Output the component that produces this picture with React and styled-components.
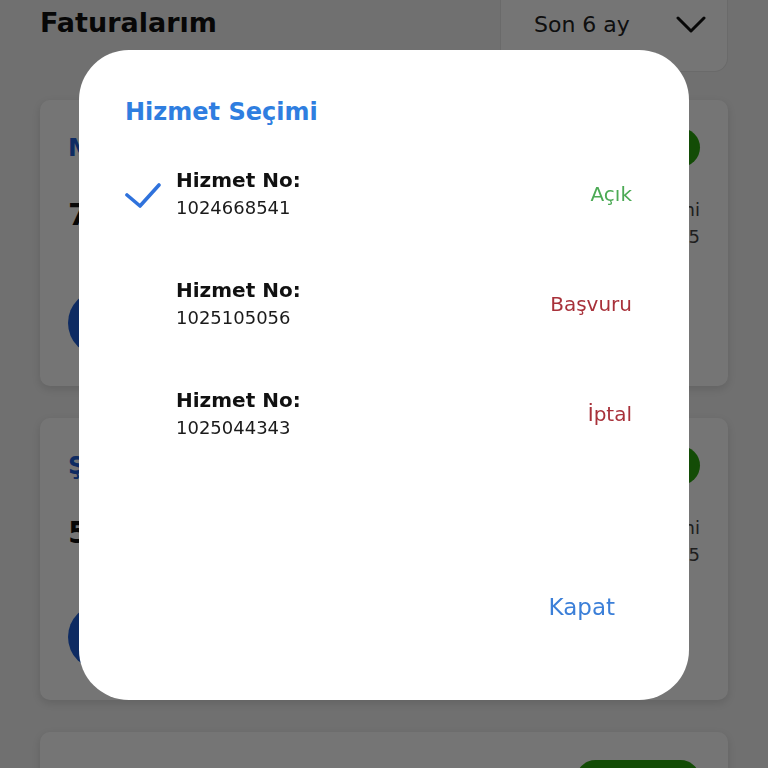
import React, { useState } from "react";
import styled, { createGlobalStyle } from "styled-components";

const GlobalStyle = createGlobalStyle`
  body {
    margin: 0;
    background: #f3f3f3;
    font-family: "DejaVu Sans", "Noto Sans", sans-serif;
  }
  #root {
    height: 768px;
    overflow: hidden;
  }
`;

const Page = styled.div`
  padding: 0 40px;
  display: flex;
  flex-direction: column;
`;

const Header = styled.div`
  display: flex;
  justify-content: space-between;
  align-items: flex-start;
  height: 72px;
`;

const PageTitle = styled.h1`
  margin: 6px 0 0;
  font-size: 27px;
  font-weight: 700;
  color: #111;
  line-height: 34px;
`;

const Dropdown = styled.div`
  box-sizing: border-box;
  width: 228px;
  height: 72px;
  padding: 0 21px 22px 33px;
  display: flex;
  align-items: center;
  justify-content: space-between;
  background: #fff;
  border: 1px solid #e6e6e6;
  border-top: none;
  border-radius: 0 0 14px 14px;
  font-size: 22px;
  color: #222;
`;

const CardList = styled.div`
  display: flex;
  flex-direction: column;
  gap: 32px;
  margin-top: 28px;
`;

const Card = styled.div`
  box-sizing: border-box;
  height: ${(props) => props.height}px;
  padding: 28px 28px 30px 28px;
  background: #fff;
  border-radius: 10px;
  box-shadow: 0 3px 8px rgba(0, 0, 0, 0.12);
  display: flex;
  flex-direction: column;
`;

const CardTop = styled.div`
  display: flex;
  justify-content: space-between;
  align-items: center;
`;

const CardTitle = styled.span`
  font-size: 24px;
  font-weight: 700;
  color: #1f5fd6;
`;

const Badge = styled.span`
  padding: 10px 30px;
  border-radius: 20px;
  background: #2ba50e;
  color: #fff;
  font-size: 16px;
  font-weight: 600;
`;

const CardMid = styled.div`
  display: flex;
  justify-content: space-between;
  align-items: flex-start;
  margin-top: 30px;
`;

const Amount = styled.span`
  font-size: 30px;
  font-weight: 800;
  color: #111;
`;

const DateBox = styled.div`
  display: flex;
  flex-direction: column;
  align-items: flex-end;
  gap: 6px;
  margin-top: 2px;
  font-size: 18px;
  color: #444;
`;

const CardBottom = styled.div`
  margin-top: auto;
  display: flex;
  align-items: center;
`;

const RoundButton = styled.span`
  width: 66px;
  height: 66px;
  border-radius: 50%;
  background: #1f5fd6;
`;

const Scrim = styled.div`
  position: fixed;
  inset: 0;
  background: rgba(0, 0, 0, 0.54);
`;

const Modal = styled.div`
  position: fixed;
  left: 79px;
  top: 50px;
  width: 610px;
  height: 650px;
  box-sizing: border-box;
  padding: 46px 57px 0 46px;
  background: #fff;
  border-radius: 50px;
  display: flex;
  flex-direction: column;
`;

const ModalTitle = styled.h2`
  margin: 0;
  font-size: 24px;
  line-height: 32px;
  font-weight: 700;
  color: #2f7ee0;
`;

const OptionList = styled.div`
  margin-top: 11px;
  display: flex;
  flex-direction: column;
`;

const Option = styled.div`
  height: 110px;
  display: flex;
  align-items: center;
  cursor: pointer;
`;

const CheckSlot = styled.div`
  width: 51px;
  display: flex;
  align-items: center;
  padding-top: 4px;
`;

const OptionText = styled.div`
  flex: 1;
  display: flex;
  flex-direction: column;
  gap: 4px;
  margin-top: -2px;
`;

const OptionLabel = styled.span`
  font-size: 20px;
  font-weight: 700;
  color: #111;
  line-height: 26px;
`;

const OptionNumber = styled.span`
  font-size: 18px;
  color: #1a1a1a;
  line-height: 22px;
`;

const Status = styled.span`
  font-size: 20px;
  color: ${(props) => props.color};
`;

const Footer = styled.div`
  margin-top: auto;
  display: flex;
  justify-content: flex-end;
  padding: 0 17px 73px 0;
`;

const TextButton = styled.button`
  border: none;
  background: none;
  padding: 0;
  height: 40px;
  font-family: inherit;
  font-size: 23px;
  color: #3b7fd8;
  cursor: pointer;
`;

const Chevron = () => (
  <svg width="30" height="18" viewBox="0 0 30 18">
    <polyline points="2,2 15,15 28,2" fill="none" stroke="#111" strokeWidth="3" strokeLinecap="round" strokeLinejoin="round" />
  </svg>
);

const Check = () => (
  <svg width="36" height="28" viewBox="0 0 36 28">
    <polyline points="2,13 15,24 34,3" fill="none" stroke="#2f72dc" strokeWidth="3.6" strokeLinecap="round" strokeLinejoin="round" />
  </svg>
);

const invoices = [
  { title: "Mobil Hat", amount: "75,40 TL", date: "12.03.2025", height: 286 },
  { title: "Şebeke", amount: "52,90 TL", date: "12.02.2025", height: 282 },
  { title: "Sabit Hat", amount: "99,00 TL", date: "12.01.2025", height: 282 },
];

const services = [
  { no: "1024668541", status: "Açık", color: "#4caa55" },
  { no: "1025105056", status: "Başvuru", color: "#a8313a" },
  { no: "1025044343", status: "İptal", color: "#a8313a" },
];

export default function App() {
  const [selected, setSelected] = useState(0);

  return (
    <>
      <GlobalStyle />
      <Page>
        <Header>
          <PageTitle>Faturalarım</PageTitle>
          <Dropdown>
            <span>Son 6 ay</span>
            <Chevron />
          </Dropdown>
        </Header>
        <CardList>
          {invoices.map((inv) => (
            <Card key={inv.title} height={inv.height}>
              <CardTop>
                <CardTitle>{inv.title}</CardTitle>
                <Badge>Ödendi</Badge>
              </CardTop>
              <CardMid>
                <Amount>{inv.amount}</Amount>
                <DateBox>
                  <span>Son Ödeme Tarihi</span>
                  <span>{inv.date}</span>
                </DateBox>
              </CardMid>
              <CardBottom>
                <RoundButton />
              </CardBottom>
            </Card>
          ))}
        </CardList>
      </Page>
      <Scrim />
      <Modal>
        <ModalTitle>Hizmet Seçimi</ModalTitle>
        <OptionList>
          {services.map((s, i) => (
            <Option key={s.no} onClick={() => setSelected(i)}>
              <CheckSlot>{selected === i && <Check />}</CheckSlot>
              <OptionText>
                <OptionLabel>Hizmet No:</OptionLabel>
                <OptionNumber>{s.no}</OptionNumber>
              </OptionText>
              <Status color={s.color}>{s.status}</Status>
            </Option>
          ))}
        </OptionList>
        <Footer>
          <TextButton>Kapat</TextButton>
        </Footer>
      </Modal>
    </>
  );
}
